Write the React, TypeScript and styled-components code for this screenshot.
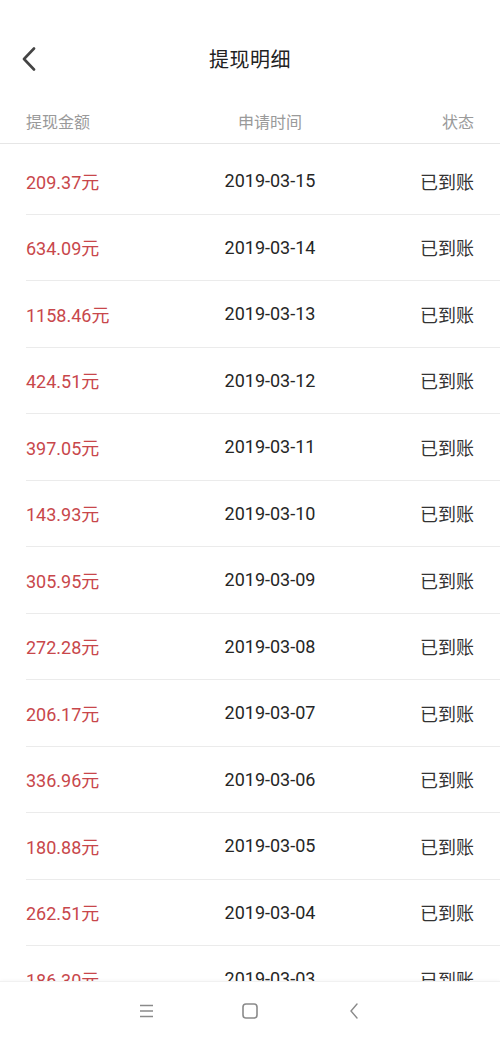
import styled, { createGlobalStyle } from "styled-components"

const GlobalStyle = createGlobalStyle`
  html, body {
    margin: 0;
    padding: 0;
    background: #ffffff;
  }
  * {
    box-sizing: border-box;
  }
`

const Page = styled.div`
  width: 500px;
  height: 1040px;
  display: flex;
  flex-direction: column;
  background: #ffffff;
  font-family: Roboto, "Noto Sans CJK SC", sans-serif;
  overflow: hidden;
`

const TitleBar = styled.div`
  height: 100px;
  display: flex;
  align-items: center;
  justify-content: center;
  position: relative;
  padding-top: 16px;
`

const BackBtn = styled.div`
  position: absolute;
  left: 20px;
  top: 46px;
  width: 18px;
  height: 26px;
  display: flex;
  align-items: center;
  justify-content: center;
`

const Title = styled.h1`
  margin: 0;
  font-size: 20px;
  font-weight: 400;
  color: #222222;
  letter-spacing: 0.5px;
`

const Grid = styled.div`
  display: grid;
  grid-template-columns: 150px 1fr 110px;
  align-items: center;
  padding: 0 26px;
`

const HeadRow = styled(Grid)`
  height: 44px;
  border-bottom: 1px solid #e6e6e6;
  padding-bottom: 1px;
  font-size: 16px;
  color: #9a9a9a;
`

const Cell = styled.div<{ $align: "left" | "center" | "right" }>`
  text-align: ${({ $align }) => $align};
  white-space: nowrap;
`

const List = styled.div`
  flex: 1;
  overflow: hidden;
  padding-top: 4px;
`

const Row = styled.div`
  height: 66.5px;
  margin-left: 26px;
  border-bottom: 1px solid #ebebeb;
  display: grid;
  grid-template-columns: 150px 1fr 110px;
  align-items: center;
  padding-right: 26px;
  font-size: 18px;
`

const Amount = styled(Cell)`
  color: #c8474b;
`

const DateText = styled(Cell)`
  color: #262626;
`

const Status = styled(Cell)`
  color: #333333;
`

const NavBar = styled.div`
  height: 59px;
  flex-shrink: 0;
  display: flex;
  align-items: center;
  justify-content: center;
  gap: 86px;
  border-top: 1px solid #f1f1f1;
  background: #ffffff;
  box-shadow: 0 -1px 3px rgba(0, 0, 0, 0.03);
`

const NavIcon = styled.div`
  width: 18px;
  height: 18px;
  display: flex;
  align-items: center;
  justify-content: center;
`

const records = [
  ["209.37", "2019-03-15"],
  ["634.09", "2019-03-14"],
  ["1158.46", "2019-03-13"],
  ["424.51", "2019-03-12"],
  ["397.05", "2019-03-11"],
  ["143.93", "2019-03-10"],
  ["305.95", "2019-03-09"],
  ["272.28", "2019-03-08"],
  ["206.17", "2019-03-07"],
  ["336.96", "2019-03-06"],
  ["180.88", "2019-03-05"],
  ["262.51", "2019-03-04"],
  ["186.30", "2019-03-03"],
]

export default function App() {
  return (
    <Page>
      <GlobalStyle />
      <TitleBar>
        <BackBtn>
          <svg width="14" height="24" viewBox="0 0 14 24">
            <path
              d="M12 1.5 L2 12 L12 22.5"
              fill="none"
              stroke="#444"
              strokeWidth="2.6"
              strokeLinecap="round"
              strokeLinejoin="round"
            />
          </svg>
        </BackBtn>
        <Title>提现明细</Title>
      </TitleBar>
      <HeadRow>
        <Cell $align="left">提现金额</Cell>
        <Cell $align="center">申请时间</Cell>
        <Cell $align="right">状态</Cell>
      </HeadRow>
      <List>
        {records.map(([amount, date]) => (
          <Row key={date}>
            <Amount $align="left">{amount}元</Amount>
            <DateText $align="center">{date}</DateText>
            <Status $align="right">已到账</Status>
          </Row>
        ))}
      </List>
      <NavBar>
        <NavIcon>
          <svg width="15" height="14" viewBox="0 0 15 14">
            <path d="M1 1.5 H14 M1 7 H14 M1 12.5 H14" stroke="#8a8a8a" strokeWidth="1.4" />
          </svg>
        </NavIcon>
        <NavIcon>
          <svg width="16" height="16" viewBox="0 0 16 16">
            <rect x="1" y="1" width="14" height="14" rx="3" fill="none" stroke="#8a8a8a" strokeWidth="1.6" />
          </svg>
        </NavIcon>
        <NavIcon>
          <svg width="10" height="16" viewBox="0 0 10 16">
            <path d="M8 1 L2 8 L8 15" fill="none" stroke="#8a8a8a" strokeWidth="1.4" strokeLinecap="round" />
          </svg>
        </NavIcon>
      </NavBar>
    </Page>
  )
}
